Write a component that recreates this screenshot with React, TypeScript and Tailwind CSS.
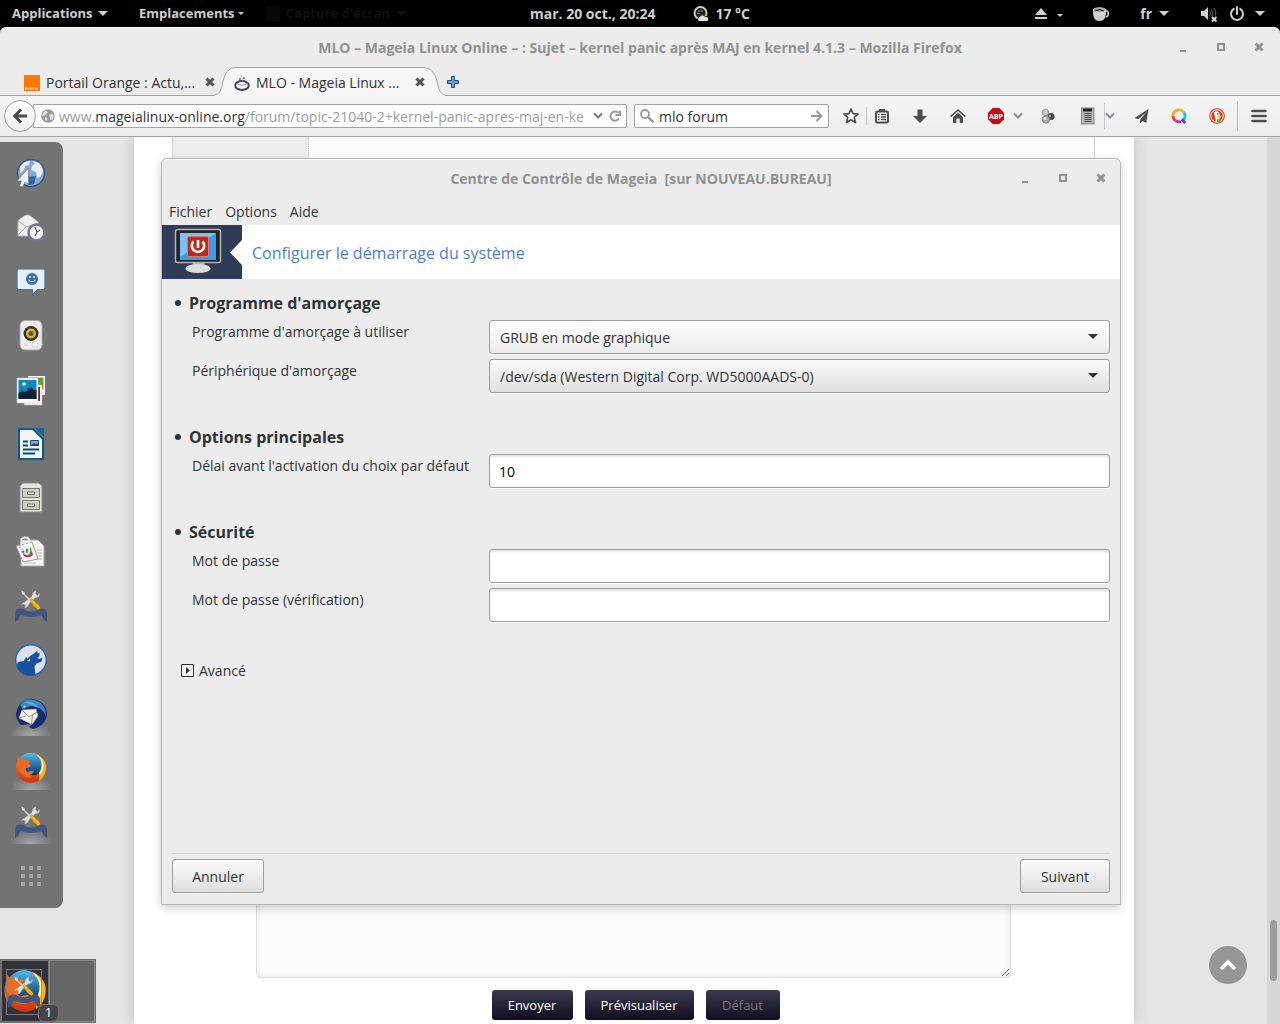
import { useState, type ReactNode } from "react";
import clsx from "clsx";

interface DockItem {
  label: string;
  icon: ReactNode;
  running?: boolean;
}

function Caret({ className }: { className?: string }) {
  return (
    <svg viewBox="0 0 10 5" className={clsx("shrink-0", className)} fill="currentColor" aria-hidden="true">
      <path d="M0 0h10L5 5z" />
    </svg>
  );
}

function CloseGlyph() {
  return (
    <svg viewBox="0 0 10 10" className="h-[10px] w-[10px]" stroke="currentColor" strokeWidth="3" aria-hidden="true">
      <path d="M1.500 1.500l7 7M8.500 1.500l-7 7" />
    </svg>
  );
}

function Chevron({ className }: { className?: string }) {
  return (
    <svg viewBox="0 0 10 8" className={clsx("h-2 w-[10px] shrink-0", className)} fill="none" stroke="currentColor" strokeWidth="2" aria-hidden="true">
      <path d="M1 1.500l4 4 4-4" />
    </svg>
  );
}

/* ---------- GNOME top bar ---------- */

function TopBar() {
  return (
    <header className="grid h-[27px] shrink-0 grid-cols-[1fr_auto_1fr] items-center bg-black text-[14px] font-bold text-[#cfcfcf]">
      <nav className="flex items-center pl-3 text-[13px]">
        <button className="flex w-[127px] items-center gap-[5px]">
          Applications <Caret className="h-[5px] w-[10px]" />
        </button>
        <button className="flex w-[127px] items-center gap-[3px]">
          Emplacements <Caret className="h-[5px] w-[6px]" />
        </button>
        <button className="flex items-center gap-[6px] text-[#101010]">
          <span className="h-4 w-[14px] bg-[#080808]" />
          Capture d'écran <Caret className="h-[5px] w-[10px]" />
        </button>
      </nav>
      <div className="flex items-center gap-[38px]">
        <button>mar. 20 oct., 20:24</button>
        <button className="flex items-center gap-[6px]">
          <svg viewBox="0 0 16 16" className="h-4 w-4" aria-hidden="true">
            <circle cx="7.500" cy="7" r="6" fill="#222" stroke="#d0d0d0" strokeWidth="1.800" />
            <path d="M5 5h5M4 7.500h3" stroke="#777" />
            <path d="M6 15.500a2.400 2.400 0 0 1 .4-4.500 3 3 0 0 1 5.600-.4 2.500 2.500 0 0 1 2 4.900z" fill="#e4e4e4" stroke="#000" strokeWidth=".8" />
          </svg>
          17 °C
        </button>
      </div>
      <div className="flex items-center justify-end pr-[15px]">
        <button aria-label="Éjecter" className="flex items-center">
          <svg viewBox="0 0 12 12" className="h-3 w-3" fill="currentColor" aria-hidden="true">
            <path d="M6 0l6 7H0zM0 9h12v2H0z" />
          </svg>
          <Caret className="mt-1 ml-[10px] h-[5px] w-[6px]" />
        </button>
        <button aria-label="Caféine" className="ml-[30px]">
          <svg viewBox="0 0 16 14" className="h-[14px] w-4" aria-hidden="true">
            <path d="M12 4h1.600a1.600 1.600 0 0 1 1.600 1.600v1.600A2.600 2.600 0 0 1 12.600 10" fill="none" stroke="#cfcfcf" strokeWidth="1.600" />
            <path d="M0 3c0 7 1 11 6.500 11S13 10 13 3z" fill="#cfcfcf" />
            <ellipse cx="6.500" cy="3" rx="6.200" ry="2.200" fill="#8f8f8f" stroke="#dedede" />
            <path d="M2 4q4.500-2.400 9 0" stroke="#222" fill="none" />
          </svg>
        </button>
        <button className="ml-[31px] flex items-center gap-[7px]">
          fr <Caret className="h-[5px] w-[10px]" />
        </button>
        <button aria-label="Menu système" className="ml-8 flex items-center">
          <svg viewBox="0 0 16 16" className="h-4 w-4" aria-hidden="true">
            <path d="M0 5h3l4-4v13l-4-4H0z" fill="#cfcfcf" />
            <path d="M8.500 5q2 2.500 0 5M10.500 3.500q3 4 0 7M12.800 2q3.600 4.500 1 7.500" fill="none" stroke="#555" strokeWidth="1.200" />
            <path d="M11 11l4.500 4.500M15.500 11L11 15.500" stroke="#e0e0e0" strokeWidth="1.900" />
          </svg>
          <svg viewBox="0 0 16 16" className="ml-3 h-4 w-4" fill="none" stroke="currentColor" strokeWidth="2" aria-hidden="true">
            <path d="M4.800 2.800a6 6 0 1 0 6.400 0M8 1v7" strokeLinecap="round" />
          </svg>
          <Caret className="ml-[10px] h-[5px] w-[10px]" />
        </button>
      </div>
    </header>
  );
}

/* ---------- Window frame ---------- */

function WindowButtons() {
  return (
    <div className="flex items-center justify-end gap-[28px] text-[#8f9290]">
      <button aria-label="Réduire" className="flex h-[10px] w-[10px] items-end justify-center">
        <span className="h-[2px] w-[6px] bg-[#8f9290]" />
      </button>
      <button aria-label="Agrandir" className="flex h-[10px] w-[10px] items-center justify-center">
        <span className="h-2 w-2 border-2 border-[#8f9290]" />
      </button>
      <button aria-label="Fermer" className="flex h-[10px] w-[10px] items-center justify-center">
        <CloseGlyph />
      </button>
    </div>
  );
}

function TitleBar({ title, className }: { title: string; className?: string }) {
  return (
    <div className={clsx("grid grid-cols-[1fr_auto_1fr] items-center pb-[2px]", className)}>
      <span />
      <h1 className="text-[14px] font-bold whitespace-pre text-[#8f9290]">{title}</h1>
      <WindowButtons />
    </div>
  );
}

/* ---------- Firefox ---------- */

function TabStrip() {
  return (
    <div role="tablist" className="flex h-7 border-b border-[#a3a3a3] text-[14px] text-[#2e3436]">
      <div className="flex w-[215px] items-center pt-[2px] pl-6">
        <button role="tab" className="flex flex-1 items-center gap-[6px] whitespace-nowrap">
          <svg viewBox="0 0 16 16" className="h-4 w-4" aria-hidden="true">
            <path d="M0 0h16v16H0z" fill="#ff7900" />
            <path d="M1 13.500h13" stroke="#ffd2a6" strokeWidth="2" strokeDasharray="2 .5" />
          </svg>
          Portail Orange : Actu,...
        </button>
        <button aria-label="Fermer l'onglet" className="pb-[2px] text-[#555]">
          <CloseGlyph />
        </button>
      </div>
      <div className="relative flex w-[230px] items-center pt-[2px] pr-5 pl-[19px]">
        <svg viewBox="0 0 230 29" preserveAspectRatio="none" className="absolute -top-px left-0 h-[29px] w-full" aria-hidden="true">
          <path d="M-4 28.500C6 28.500 6 22 8 14S14 .5 20 .5H208C215 .5 220 6 222 14S224 28.500 234 28.500V29H-4z" fill="#f5f5f5" />
          <path d="M-4 28.500C6 28.500 6 22 8 14S14 .5 20 .5H208C215 .5 220 6 222 14S224 28.500 234 28.500" fill="none" stroke="#a3a3a3" />
        </svg>
        <button role="tab" aria-selected="true" className="relative flex flex-1 items-center gap-[6px] whitespace-nowrap">
          <svg viewBox="0 0 16 16" className="h-4 w-4" aria-hidden="true">
            <ellipse cx="8" cy="10.500" rx="6.800" ry="4.400" fill="#fff" stroke="#36436b" strokeWidth="2" />
            <path d="M2.500 8.200q5.500 4 11 0" fill="none" stroke="#8b97b8" strokeWidth="1.200" />
            <circle cx="6" cy="4" r="1.200" fill="#6dbb42" />
            <circle cx="9.800" cy="3.200" r="1.200" fill="#3f9ed9" />
            <circle cx="7.500" cy="1.200" r="1" fill="#e7b93c" />
            <circle cx="8.800" cy="6" r="1" fill="#d94545" />
          </svg>
          MLO - Mageia Linux ...
        </button>
        <button aria-label="Fermer l'onglet" className="relative pb-[2px] text-[#555]">
          <CloseGlyph />
        </button>
      </div>
      <button aria-label="Nouvel onglet" className="ml-[2px]">
        <svg viewBox="0 0 12 12" className="h-3 w-3" aria-hidden="true">
          <path d="M4.500.5h3v4h4v3h-4v4h-3v-4h-4v-3h4z" fill="#6f9fd8" stroke="#204a87" />
        </svg>
      </button>
    </div>
  );
}

function ToolbarIcons() {
  const size = "h-[18px] w-4 shrink-0";
  return (
    <div className="flex items-center pr-[13px] pl-[14px] text-[#4d4d4d]">
      <button aria-label="Marquer cette page">
        <svg viewBox="0 0 16 18" className={size} fill="#fff" stroke="currentColor" strokeWidth="1.700" strokeLinejoin="round" aria-hidden="true">
          <path d="M8 2l2 4.600 5 .5-3.800 3.300 1.200 5L8 12.800l-4.400 2.600 1.200-5L1 7.100l5-.5z" />
        </svg>
      </button>
      <span className="ml-[7px] h-[18px] w-px bg-[#c4c8cc]" />
      <button aria-label="Marque-pages" className="ml-[7px]">
        <svg viewBox="0 0 16 18" className={size} aria-hidden="true">
          <rect x="2" y="4.500" width="12" height="11" rx="1.500" fill="#fff" stroke="currentColor" strokeWidth="2" />
          <path d="M5 2h6v3H5z" fill="currentColor" />
          <path d="M4 7.500h1.500M7 7.500h5M4 10h1.500M7 10h5M4 12.500h1.500M7 12.500h5" stroke="currentColor" strokeWidth="1.300" />
        </svg>
      </button>
      <button aria-label="Téléchargements" className="ml-[22px]">
        <svg viewBox="0 0 16 18" className={size} fill="currentColor" aria-hidden="true">
          <path d="M5.500 2.500h5V9H15l-7 7-7-7h4.500z" />
        </svg>
      </button>
      <button aria-label="Accueil" className="ml-[22px]">
        <svg viewBox="0 0 16 18" className={size} fill="currentColor" aria-hidden="true">
          <path d="M8 5.500l5 4.700V16H9.700v-4.500H6.300V16H3v-5.800z" />
          <path d="M.7 9.700L8 3l7.300 6.700" fill="none" stroke="currentColor" strokeWidth="1.600" />
        </svg>
      </button>
      <button aria-label="Adblock Plus" className="ml-[22px] h-4 w-4">
        <svg viewBox="0 0 16 16" className="h-4 w-4" aria-hidden="true">
          <path d="M4.700 0h6.600L16 4.700v6.600L11.300 16H4.700L0 11.300V4.700z" fill="#c70d0d" />
          <text x="8" y="10.800" textAnchor="middle" fontSize="7" fontWeight="700" fill="#fff">ABP</text>
        </svg>
      </button>
      <Chevron className="ml-[9px] text-[#8b8b8b]" />
      <button aria-label="Extension" className="ml-[17px]">
        <svg viewBox="0 0 16 18" className={size} aria-hidden="true">
          <circle cx="11" cy="9.500" r="3.600" fill="#444" />
          <circle cx="10" cy="9" r="1.300" fill="#aaa" />
          <circle cx="5.500" cy="5.500" r="3.200" fill="#c9c9c9" stroke="#777" strokeWidth=".7" />
          <circle cx="6" cy="12.500" r="3.700" fill="#aaa" stroke="#666" strokeWidth=".7" />
          <circle cx="5" cy="11.500" r="1.400" fill="#eee" />
        </svg>
      </button>
      <button aria-label="Liste" className="ml-[24px]">
        <svg viewBox="0 0 16 18" className={size} aria-hidden="true">
          <rect x="1.500" y="1" width="12.500" height="16" fill="#b9b9b9" stroke="#888" />
          <path d="M3 1.500h9v3H3z" fill="#222" />
          <path d="M4.500 6.500h7M4.500 8.500h7M4.500 10.500h7M4.500 12.500h7M4.500 14.500h7" stroke="#444" />
        </svg>
      </button>
      <span className="ml-2 h-[26px] w-px bg-[#c4c8cc]" />
      <Chevron className="text-[#8b8b8b]" />
      <button aria-label="Partager" className="ml-[19px]">
        <svg viewBox="0 0 16 18" className={size} fill="currentColor" aria-hidden="true">
          <path d="M14.500 2L.5 11l3.700 1.200L12 5.500 6 13v3.500l2.300-2.600 4 1.800z" />
        </svg>
      </button>
      <button aria-label="Qwant" className="ml-[21px]">
        <svg viewBox="0 0 16 18" className={size} fill="none" strokeWidth="2.800" aria-hidden="true">
          <path d="M8 2.800A6 6 0 0 0 2 8.800" stroke="#f7a823" />
          <path d="M2 8.800a6 6 0 0 0 3 5.200" stroke="#f0442f" />
          <path d="M5 14a6 6 0 0 0 5 .5" stroke="#d51c9c" />
          <path d="M8 2.800a6 6 0 0 1 5 2.700" stroke="#b8d432" />
          <path d="M13 5.500a6 6 0 0 1-.8 7.500" stroke="#28bfe0" />
          <path d="M10.800 12.200l3.400 3.800" stroke="#3157c8" />
        </svg>
      </button>
      <button aria-label="DuckDuckGo" className="ml-[22px]">
        <svg viewBox="0 0 16 18" className={size} aria-hidden="true">
          <circle cx="8" cy="9" r="7.800" fill="#d9401f" />
          <circle cx="8" cy="9" r="6.200" fill="none" stroke="#fff" />
          <path d="M5 5.500q2.500-2.700 5 0l1 3-1 5.700q-2 .8-3 .2z" fill="#fff" />
          <path d="M8.500 8.500l4 .5-1 1.700H8z" fill="#fcc60e" />
          <path d="M8 12l3.500 1-1 2.200H8z" fill="#4caf3c" />
          <circle cx="8.800" cy="6.800" r=".9" fill="#2b5aa8" />
        </svg>
      </button>
      <span className="ml-3 h-[30px] w-px bg-[#b4b8bc]" />
      <button aria-label="Menu" className="ml-[13px]">
        <svg viewBox="0 0 16 18" className={size} stroke="currentColor" strokeWidth="2.600" strokeLinecap="round" aria-hidden="true">
          <path d="M1.500 4h13M1.500 9h13M1.500 14h13" />
        </svg>
      </button>
    </div>
  );
}

function NavToolbar() {
  const [query, setQuery] = useState("mlo forum");
  return (
    <div className="flex h-[41px] items-center border-b border-[#a3a3a3] bg-linear-to-b from-[#f5f5f5] to-[#ededed] text-[14px]">
      <button aria-label="Page précédente" className="z-10 ml-1 flex h-8 w-8 shrink-0 items-center justify-center rounded-full border border-[#9ca0a4] bg-linear-to-b from-white to-[#ececec]">
        <svg viewBox="0 0 16 16" className="h-4 w-4" fill="none" stroke="#4a4a4a" strokeWidth="3" aria-hidden="true">
          <path d="M9 1.500L2.700 8 9 14.500M3 8h12" />
        </svg>
      </button>
      <div className="relative -ml-[3px] flex h-6 min-w-0 flex-1 items-center rounded-r-[2px] border border-[#a3a3a3] bg-white pr-[5px] pl-[7px]">
        <svg viewBox="0 0 14 14" className="h-[14px] w-[14px] shrink-0" aria-hidden="true">
          <circle cx="7" cy="7" r="6.800" fill="#999" />
          <path d="M2 4l3-2.500 2 1.500-2 2.500L3 7 1 6.500zM8 6l3-1.500 2 2.500-1.500 3.500L9.500 11 9 8.500zM4 8l2.500 1.500L5.500 12 4 11z" fill="#e3e3e3" />
        </svg>
        <div className="ml-1 min-w-0 flex-1 overflow-hidden pt-px whitespace-nowrap text-[#9a9c9b]">
          www.<span className="text-[#2e3436]">mageialinux-online.org</span>/forum/topic-21040-2+kernel-panic-apres-maj-en-ke
        </div>
        <input type="url" aria-label="Adresse" className="absolute inset-y-0 right-10 left-6 bg-transparent outline-none" />
        <Chevron className="ml-[5px] text-[#777]" />
        <button aria-label="Actualiser" className="ml-[6px]">
          <svg viewBox="0 0 12 12" className="h-3 w-3" fill="none" stroke="#8d9aab" strokeWidth="2" aria-hidden="true">
            <path d="M10 8.500A4.600 4.600 0 1 1 9.300 2.800" />
            <path d="M11 .5v4.500H6.500" />
          </svg>
        </button>
      </div>
      <div className="ml-[7px] flex h-6 w-[195px] shrink-0 items-center rounded-[2px] border border-[#a3a3a3] bg-white px-[5px]">
        <svg viewBox="0 0 14 14" className="h-[14px] w-[14px] shrink-0" fill="none" stroke="#999" strokeWidth="1.800" aria-hidden="true">
          <circle cx="5" cy="5" r="4" />
          <path d="M8 8l5.300 5.300" strokeWidth="2.400" />
        </svg>
        <input
          type="text"
          aria-label="Rechercher"
          value={query}
          onChange={(e) => setQuery(e.target.value)}
          className="ml-[5px] min-w-0 flex-1 bg-transparent pt-px text-[#2e3436] outline-none"
        />
        <button aria-label="Lancer la recherche">
          <svg viewBox="0 0 12 12" className="h-3 w-3" fill="none" stroke="#8d9aab" strokeWidth="2" aria-hidden="true">
            <path d="M0 6h10.500M5.500 1l5 5-5 5" />
          </svg>
        </button>
      </div>
      <ToolbarIcons />
    </div>
  );
}

function ForumPage() {
  return (
    <div className="relative flex min-h-0 flex-1 bg-[#e5e5e5]">
      <main className="flex min-w-0 flex-1 justify-center overflow-hidden">
        <div className="flex w-[1000px] flex-col items-center bg-white shadow-[0_0_14px_rgba(0,0,0,0.16)]">
          <article className="flex h-[520px] w-[923px] shrink-0 border-x border-[#cfcfe0]">
            <div className="w-[136px] border-r border-dotted border-[#ccc] bg-[#ededed]" />
            <div className="flex-1 bg-[#fcfcfc]" />
          </article>
          <form className="mt-auto flex flex-col items-center gap-3 pb-1">
            <textarea
              aria-label="Message"
              className="h-[150px] w-[755px] rounded border border-[#dedede] bg-[#fbfbfb] shadow-[inset_0_0_6px_rgba(0,0,0,0.08)]"
            />
            <div className="flex gap-3 pl-1 text-[13px] text-white">
              <button type="button" className="h-[30px] w-[81px] rounded-[3px] bg-linear-to-b from-[#3c3b4d] to-[#100e20] pt-[2px]">
                Envoyer
              </button>
              <button type="button" className="h-[30px] w-[109px] rounded-[3px] bg-linear-to-b from-[#3c3b4d] to-[#100e20] pt-[2px]">
                Prévisualiser
              </button>
              <button type="button" disabled className="h-[30px] w-[74px] rounded-[3px] bg-linear-to-b from-[#3c3b4d] to-[#100e20] pt-[2px] text-[#777]">
                Défaut
              </button>
            </div>
          </form>
        </div>
      </main>
      <div className="flex w-[13px] justify-center bg-[#d6d6d6]">
        <div className="mt-auto mb-[43px] h-[61px] w-[7px] rounded-full bg-[#9c9d9d]" />
      </div>
      <a
        href="#top"
        aria-label="Haut de page"
        className="absolute right-[33px] bottom-10 flex h-[38px] w-[38px] items-center justify-center rounded-full bg-[#969696]"
      >
        <svg viewBox="0 0 16 12" className="h-3 w-4" fill="none" stroke="#fff" strokeWidth="3.500" strokeLinecap="round" aria-hidden="true">
          <path d="M2 9l6-6 6 6" />
        </svg>
      </a>
    </div>
  );
}

/* ---------- Dock ---------- */

function ToolsIcon() {
  return (
    <svg viewBox="0 0 32 32" className="h-8 w-8" aria-hidden="true">
      <path d="M0 32V23q1-4.500 5-4.500 3 0 6 2 5 2 10 0 3-2 6-2 4 0 5 4.500v9l-3-2-2.500-5q-10.500 4-21 0L3 30z" fill="#3f5683" />
      <path d="M6.500.5l3 1.500.5 2.500 7 6-1.500 1.500-6.500-7L7 4z" fill="#d8d8d8" />
      <path d="M9 12.500l8-6q-.5-4 4-6l-.5 3.500 2 1.500L25 3q-.5 4.500-5 5l-6.500 6q0 3-3.500 4l.5-3-2-1L6.500 15q.5-2.500 2.500-2.500z" fill="#dedede" stroke="#aaa" strokeWidth=".5" />
      <path d="M15 10l1.500-1.500 8 7.500q2 3.500-1.500 3.500-4-2-8-9.500z" fill="#f5b90a" stroke="#b27d00" strokeWidth=".5" />
    </svg>
  );
}

function FirefoxIcon({ className = "h-8 w-8" }: { className?: string }) {
  return (
    <svg viewBox="0 0 32 32" className={className} aria-hidden="true">
      <defs>
        <linearGradient id="ffBlue" x1="0" y1="0" x2="0" y2="1">
          <stop offset="0" stopColor="#4fbdea" />
          <stop offset="1" stopColor="#0a2f6e" />
        </linearGradient>
        <linearGradient id="ffFox" x1="0" y1="0" x2="0" y2="1">
          <stop offset="0" stopColor="#f28a2c" />
          <stop offset="1" stopColor="#d2300f" />
        </linearGradient>
      </defs>
      <circle cx="16" cy="16" r="15" fill="url(#ffFox)" />
      <path d="M23 3q9 5 8 14-1 8-7 12 1-6 0-11z" fill="#f9b41c" />
      <path d="M22 2.500q6 4 6.500 11 0 6-4 10z" fill="#fff1a8" />
      <path d="M6 5Q11 0 17 1t9 8q2 8-3 13-6 3-11-1L4 9z" fill="url(#ffBlue)" />
      <path d="M2 10l1-6 2 3q4-1 6 1l4-.5q0 2-2 4l3 1.500q-1 2.500-5 3-1 3 2 4 3-2 6-1-1 3-5 4l3 2q-6 2-11-4-4-5-4-11z" fill="#ee6a20" />
    </svg>
  );
}

const DOCK: DockItem[] = [
  {
    label: "Web",
    icon: (
      <svg viewBox="0 0 32 32" className="h-8 w-8" aria-hidden="true">
        <circle cx="16" cy="15" r="13.500" fill="#86a8d0" stroke="#34588f" strokeWidth="1.500" />
        <path d="M5 9q4-6 10-6l-1 4-4 1-1 4-4 3zM17 3l7 2q4 4 4 9l-3 5-3 1-1-6-5-2 1-4 3-2zM9 17l4 3-1 6-5-3z" fill="#e9eef4" />
        <path d="M13 19l8-1-2 8-6 1z" fill="#2f62a6" />
        <path d="M13.500 10v16l-3.500-2-2.500 5-3-1L6.500 23H2z" fill="#f4f4f4" stroke="#777" strokeWidth=".7" />
      </svg>
    ),
  },
  {
    label: "Evolution",
    icon: (
      <svg viewBox="0 0 32 32" className="h-8 w-8" aria-hidden="true">
        <path d="M3 9q0-1 8-6h3l9 7v14H3z" fill="#f1f1f1" stroke="#bbb" />
        <path d="M3 9l9 6 10-4M3 23l8-8M12 14l6 5" stroke="#aaa" fill="none" />
        <circle cx="21.500" cy="20.500" r="8" fill="#f4f4f4" stroke="#77719c" strokeWidth="2.500" />
        <path d="M20 15l2 5-2 4M22 20l3-2" stroke="#333" fill="none" />
      </svg>
    ),
  },
  {
    label: "Empathy",
    icon: (
      <svg viewBox="0 0 32 32" className="h-8 w-8" aria-hidden="true">
        <path d="M3.500 3h25Q30 3 30 4.500v17q0 2-1.500 2h-6l-5 5v-5h-14q-1.500 0-1.500-2v-17Q2 3 3.500 3z" fill="#e7eff9" stroke="#3f6fb4" strokeWidth="1.200" />
        <circle cx="17" cy="13" r="6" fill="#3a6fc4" />
        <path d="M15 10v2M19 10v2" stroke="#fff" strokeWidth="1.500" />
        <path d="M13.500 14q3.500 3.500 7 0" stroke="#fff" fill="none" />
      </svg>
    ),
  },
  {
    label: "Rhythmbox",
    icon: (
      <svg viewBox="0 0 32 32" className="h-8 w-8" aria-hidden="true">
        <path d="M3 9q-4 6 0 14M29 9q4 6 0 14" stroke="#6a83a0" fill="none" />
        <rect x="5" y=".5" width="22" height="29.500" rx="5" fill="#ececea" stroke="#aaa" />
        <circle cx="16" cy="13.500" r="7.500" fill="#333" />
        <circle cx="16" cy="13.500" r="5" fill="#e0b416" />
        <circle cx="16" cy="13.500" r="2.500" fill="#555" />
        <circle cx="20" cy="24.500" r="3" fill="#fff" stroke="#ccc" />
        <circle cx="11" cy="24.500" r="2" fill="#ddd" />
      </svg>
    ),
  },
  {
    label: "Shotwell",
    icon: (
      <svg viewBox="0 0 32 32" className="h-8 w-8" aria-hidden="true">
        <path d="M13 2h17v19H13z" fill="#fff" />
        <path d="M14 3.500h14.500v12H14z" fill="#6f9a30" />
        <path d="M9 11h18v20H9z" fill="#fff" stroke="#bbb" strokeWidth=".6" />
        <path d="M12 13h13v14H12z" fill="#8f1d22" />
        <path d="M2 4h21v25H2z" fill="#fff" stroke="#bbb" strokeWidth=".6" />
        <path d="M3.500 6h18v19h-18z" fill="#0e86c4" />
        <path d="M3.500 25v-6l3-1v-2l3 2 3-1v-3h2v2l2-3 2 3h3v9z" fill="#0a2536" />
        <circle cx="9" cy="10" r="1.800" fill="#fff3b0" />
      </svg>
    ),
  },
  {
    label: "LibreOffice Writer",
    icon: (
      <svg viewBox="0 0 32 32" className="h-8 w-8" aria-hidden="true">
        <path d="M4 1h14l10 10v20H4z" fill="#f5f3f6" stroke="#0b5a92" strokeWidth="2" />
        <path d="M20 0h9v9z" fill="#1169a5" />
        <path d="M8 13.500h5M8 17.500h5M8 21.500h16M8 25.500h12" stroke="#0b4c7d" strokeWidth="2" />
        <path d="M15.500 12.500h8v5h-8z" fill="#79b3e0" stroke="#0b4c7d" />
        <path d="M16 17l3-2 2 1 2-1v2z" fill="#444" />
      </svg>
    ),
  },
  {
    label: "Fichiers",
    icon: (
      <svg viewBox="0 0 32 32" className="h-8 w-8" aria-hidden="true">
        <path d="M8 1h16l3 3v26H5V4z" fill="#e3e3df" stroke="#8b8b86" />
        <path d="M7.500 6.500h17v9h-17zM7.500 18.500h17v9h-17z" fill="#cfcfca" stroke="#777772" />
        <path d="M12.500 10h7v2.500h-7zM12.500 22h7v2.500h-7z" fill="#f5f5f5" stroke="#666" />
      </svg>
    ),
  },
  {
    label: "Documents",
    icon: (
      <svg viewBox="0 0 32 32" className="h-8 w-8" aria-hidden="true">
        <path d="M6 4h17l6 6v20H6z" fill="#f5f5f3" stroke="#aaa" />
        <path d="M22 14h5M22 17h5M22 20h5M22 23h5M9 27h12" stroke="#bbb" />
        <path d="M1 10l16-4 6 17-15 3z" fill="#fafafa" stroke="#999" />
        <path d="M5 13l11-3 3 9-10 3z" fill="#ddd" />
        <path d="M6 16l6-3v5z" fill="#3a68b0" />
        <path d="M11 13l5-1 1 5-5 1z" fill="#4f9a3a" />
        <path d="M8 17q5 4 9-1l1 3q-5 4-9 1z" fill="#c5352d" />
        <path d="M6 12V4q0-2.500 4-2.500T14 4v12q0 2-2 2t-2-2V6" fill="none" stroke="#eee" strokeWidth="1.800" />
        <path d="M5 12V3q0-2 4-2" fill="none" stroke="#777" strokeWidth=".6" />
      </svg>
    ),
  },
  { label: "Centre de Contrôle", icon: <ToolsIcon /> },
  {
    label: "aMule",
    icon: (
      <svg viewBox="0 0 32 32" className="h-8 w-8" aria-hidden="true">
        <circle cx="16" cy="16" r="15.300" fill="#dcdfe3" stroke="#1f66b1" strokeWidth="1.400" />
        <path d="M2 20.500l1-2.500 6-1 2-4 1.500 1.500L15 12l4-2.500 3-2.500 1 2.500 1.500-1V12l-2 2 2 1 3-1.500-1 4-5 2-2 3 1 8q-7 3-12.500-.5T2 20.500z" fill="#15529b" />
        <path d="M12 17l3.500-2.500-1 3z" fill="#fff" />
      </svg>
    ),
  },
  {
    label: "Thunderbird",
    running: true,
    icon: (
      <svg viewBox="0 0 32 32" className="h-8 w-8" aria-hidden="true">
        <path d="M5 6Q10 0 18 1q13 3 14 14 0 12-14 16l-4-2 3-3L6 27Q0 20 1 15q1-5 4-9z" fill="#182c70" />
        <path d="M5 7Q9 0 17 1.500 31 4 31 18q-4-9-13-10-6 0-10 4z" fill="#3a86c2" />
        <path d="M9 4q9-2 15 6l-8-3z" fill="#62a9d6" />
        <path d="M7 12l14-1 2 7-6 8.500L4 20z" fill="#f6f2ea" stroke="#aaa39a" strokeWidth=".6" />
        <path d="M7 12l7 7 8-5M4 20l7-2M16.500 26l1-9" fill="none" stroke="#7d776f" strokeWidth=".8" />
        <circle cx="9.500" cy="8.500" r="1" fill="#e8d35a" />
      </svg>
    ),
  },
  { label: "Firefox", icon: <FirefoxIcon />, running: true },
  { label: "Centre de Contrôle de Mageia", icon: <ToolsIcon />, running: true },
  {
    label: "Afficher les applications",
    icon: (
      <svg viewBox="0 0 20 20" className="h-5 w-5" fill="#a4a4a4" aria-hidden="true">
        <path d="M0 0h4v4H0zM8 0h4v4H8zM16 0h4v4h-4zM0 8h4v4H0zM8 8h4v4H8zM16 8h4v4h-4zM0 16h4v4H0zM8 16h4v4H8zM16 16h4v4h-4z" />
      </svg>
    ),
  },
];

function Dock() {
  return (
    <nav className="absolute top-[142px] left-0 w-[63px] rounded-r-lg bg-[#737373] py-[5px]">
      {DOCK.map((item) => (
        <button
          key={item.label}
          aria-label={item.label}
          className="relative flex h-[54px] w-[62px] items-center justify-center"
        >
          {item.running && (
            <span className="absolute bottom-[5px] left-[9px] h-[14px] w-11 bg-[radial-gradient(ellipse_at_bottom,#a8a8a8_0%,#737373_70%)]" />
          )}
          <span className="relative">{item.icon}</span>
        </button>
      ))}
    </nav>
  );
}

function WorkspacePreview() {
  return (
    <div className="absolute bottom-px left-0 flex h-16 w-24 border border-[#6e6e6e] bg-[#666]">
      <div className="flex w-12 items-center justify-center border border-[#777] bg-[#32323a]">
        <FirefoxIcon className="h-11 w-11" />
      </div>
      <div className="flex-1 border border-[#8b8b8b]" />
      <div className="absolute top-[9px] left-[5px] flex h-[46px] w-9 items-center justify-center border border-[#8a8a8a]/80">
        <ToolsIcon />
      </div>
      <span className="absolute bottom-0 left-[37px] flex h-[18px] w-[21px] items-center justify-center rounded-md border border-[#777] bg-[#444] text-[13px] text-white">
        1
      </span>
    </div>
  );
}

/* ---------- Mageia Control Center ---------- */

function Section({ title, children }: { title: string; children: ReactNode }) {
  return (
    <section className="mb-[30px]">
      <h3 className="mb-[3px] flex h-7 items-center gap-2 text-[16px] font-bold">
        <span className="ml-[3px] h-[6px] w-[6px] rounded-full bg-[#2e3436]" />
        {title}
      </h3>
      <div className="flex flex-col gap-[5px]">{children}</div>
    </section>
  );
}

function Row({ id, label, children }: { id: string; label: string; children: ReactNode }) {
  return (
    <div className="grid grid-cols-[297px_1fr] pl-5">
      <label htmlFor={id} className="leading-[23px]">
        {label}
      </label>
      {children}
    </div>
  );
}

function Select({ id, option, className }: { id: string; option: string; className: string }) {
  return (
    <div className="relative">
      <select
        id={id}
        className={clsx(
          "h-[34px] w-full appearance-none rounded-[3px] border border-[#9c9e9d] bg-linear-to-b px-[10px] shadow-[0_1px_0_#fff] outline-none",
          className,
        )}
      >
        <option>{option}</option>
      </select>
      <Caret className="pointer-events-none absolute top-[14px] right-3 h-[5px] w-[10px]" />
    </div>
  );
}

const FIELD =
  "h-[34px] w-full rounded-[3px] border border-[#9c9e9d] bg-white px-[9px] text-black shadow-[inset_0_2px_2px_rgba(0,0,0,0.1),0_1px_0_#fff] outline-none";
const BUTTON =
  "h-[34px] rounded-[3px] border border-[#9c9e9d] bg-linear-to-b from-[#fafafa] to-[#dfdfdf] text-center shadow-[0_1px_0_#fff]";

function ControlCenter() {
  const [delay, setDelay] = useState("10");
  const [password, setPassword] = useState("");
  const [check, setCheck] = useState("");

  return (
    <div className="absolute top-[158px] right-[159px] left-[161px] flex min-h-[747px] flex-col rounded-t-md border border-[#b5b7b6] bg-[#ececec] text-[14px] text-[#2e3436] shadow-[0_3px_8px_rgba(0,0,0,0.2)]">
      <TitleBar title="Centre de Contrôle de Mageia  [sur NOUVEAU.BUREAU]" className="h-[39px] rounded-t-md border-t border-white px-[14px]" />
      <div className="flex h-[27px] items-center gap-[13px] px-[7px]">
        <button>Fichier</button>
        <button>Options</button>
        <button>Aide</button>
      </div>
      <div className="flex h-[54px] items-center gap-[10px] bg-white">
        <svg viewBox="0 0 80 54" className="h-[54px] w-20" aria-hidden="true">
          <path d="M0 0h80v15L68 27.500 80 40v14H0z" fill="#2f3b59" />
          <path d="M31 37h11l1.500 6h-14z" fill="#b4b4b4" />
          <ellipse cx="36" cy="43.500" rx="12.500" ry="4.500" fill="#dcdcdc" />
          <rect x="13.500" y="4.500" width="45" height="33" rx="2" fill="#252525" stroke="#b4b4b4" strokeWidth="1.500" />
          <path d="M18 8h36v27H18z" fill="#3d9cea" />
          <path d="M18 8h36L18 32z" fill="#7cc3f5" />
          <rect x="25.500" y="11.500" width="21" height="20" rx="1.500" fill="#c3281b" stroke="#e0786e" />
          <path d="M31.500 16.500a6.200 6.200 0 1 0 9 0M36 15v8" fill="none" stroke="#fff" strokeWidth="2.600" />
        </svg>
        <h2 className="pt-[2px] text-[16px] text-[#4a80d4]">Configurer le démarrage du système</h2>
      </div>

      <form className="flex flex-1 flex-col px-[10px] pt-[10px] pb-[11px]">
        <Section title="Programme d'amorçage">
          <Row id="loader" label="Programme d'amorçage à utiliser">
            <Select id="loader" option="GRUB en mode graphique" className="from-white to-[#ebebeb]" />
          </Row>
          <Row id="device" label="Périphérique d'amorçage">
            <Select id="device" option="/dev/sda (Western Digital Corp. WD5000AADS-0)" className="from-[#fafafa] to-[#dfdfdf]" />
          </Row>
        </Section>
        <Section title="Options principales">
          <Row id="delay" label="Délai avant l'activation du choix par défaut">
            <input id="delay" type="text" value={delay} onChange={(e) => setDelay(e.target.value)} className={FIELD} />
          </Row>
        </Section>
        <Section title="Sécurité">
          <Row id="password" label="Mot de passe">
            <input id="password" type="password" value={password} onChange={(e) => setPassword(e.target.value)} className={FIELD} />
          </Row>
          <Row id="check" label="Mot de passe (vérification)">
            <input id="check" type="password" value={check} onChange={(e) => setCheck(e.target.value)} className={FIELD} />
          </Row>
        </Section>

        <button type="button" aria-expanded="false" className="mt-2 ml-[9px] flex items-center gap-[5px] self-start">
          <svg viewBox="0 0 13 13" className="h-[13px] w-[13px]" aria-hidden="true">
            <path d="M.5.5h12v12H.5z" fill="#f8f8f8" stroke="#2e3436" />
            <path d="M5 3l4 3.500L5 10z" fill="#2e3436" />
          </svg>
          Avancé
        </button>

        <div className="mt-auto flex justify-between border-t border-[#d2d2d2] pt-[5px]">
          <button type="button" className={clsx(BUTTON, "w-[92px]")}>
            Annuler
          </button>
          <button type="button" className={clsx(BUTTON, "w-[90px]")}>
            Suivant
          </button>
        </div>
      </form>
    </div>
  );
}

export default function App() {
  return (
    <div className="relative flex h-screen flex-col overflow-hidden bg-black font-['Open_Sans','Noto_Sans',sans-serif]">
      <TopBar />
      <div className="flex min-h-0 flex-1 flex-col overflow-hidden rounded-t-md border-t border-white bg-[#ececec]">
        <TitleBar title="MLO – Mageia Linux Online – : Sujet – kernel panic après MAJ en kernel 4.1.3 – Mozilla Firefox" className="h-10 shrink-0 px-4" />
        <TabStrip />
        <NavToolbar />
        <ForumPage />
      </div>
      <ControlCenter />
      <Dock />
      <WorkspacePreview />
    </div>
  );
}
